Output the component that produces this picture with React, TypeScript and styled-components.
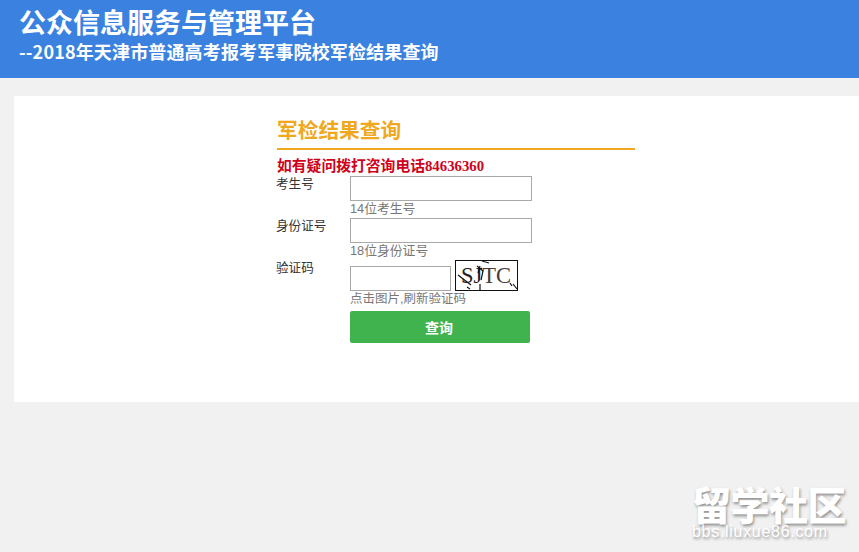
import styled, { createGlobalStyle } from "styled-components";

const GlobalStyle = createGlobalStyle`
  html, body {
    margin: 0;
    padding: 0;
    height: 100%;
    overflow: hidden;
    background: #f1f1f1;
    font-family: "Liberation Sans", "Noto Sans CJK SC", sans-serif;
  }
`;

type FieldProps = {
  label: string;
  hint: string;
};

function Field({ label, hint }: FieldProps) {
  return (
    <Row>
      <Label>{label}</Label>
      <div>
        <Input />
        <Hint>{hint}</Hint>
      </div>
    </Row>
  );
}

function Captcha() {
  return (
    <CaptchaBox viewBox="0 0 63 31" width="63" height="31">
      <rect x="0.5" y="0.5" width="62" height="30" fill="#fff" stroke="#111" />
      <text
        x="6"
        y="23"
        fontFamily="Liberation Serif"
        fontSize="24"
        textLength="50"
        lengthAdjust="spacingAndGlyphs"
      >
        <tspan fill="#222">SJ</tspan>
        <tspan fill="#4a3a3a">TC</tspan>
      </text>
      <path
        d="M3 15 L16 25 M22 6 L28 11 L26 20 M25 6 L23 13 M27 8 L23 10 M25 24 V30 M27 1 L34 3 M12 27 L15 29 M55 23 L57 26 M58 24 L62 29"
        stroke="#111"
        strokeWidth="1.2"
        fill="none"
      />
    </CaptchaBox>
  );
}

export default function App() {
  return (
    <>
      <GlobalStyle />
      <Header>
        <SiteTitle>公众信息服务与管理平台</SiteTitle>
        <SubTitle>--2018年天津市普通高考报考军事院校军检结果查询</SubTitle>
      </Header>
      <Card>
        <Form>
          <FormTitle>军检结果查询</FormTitle>
          <Notice>如有疑问拨打咨询电话84636360</Notice>
          <Field label="考生号" hint="14位考生号" />
          <Field label="身份证号" hint="18位身份证号" />
          <Row>
            <Label>验证码</Label>
            <div>
              <CaptchaLine>
                <CaptchaInput />
                <Captcha />
              </CaptchaLine>
              <CaptchaHint>点击图片,刷新验证码</CaptchaHint>
              <SubmitButton type="button">查询</SubmitButton>
            </div>
          </Row>
        </Form>
      </Card>
      <Watermark>
        <WatermarkTitle>留学社区</WatermarkTitle>
        <WatermarkUrl>bbs.liuxue86.com</WatermarkUrl>
      </Watermark>
    </>
  );
}

const Header = styled.header`
  height: 78px;
  box-sizing: border-box;
  padding: 7px 0 0 19px;
  background: #3b82e0;
  color: #fff;
`;

const SiteTitle = styled.h1`
  margin: 0;
  font-size: 27px;
  line-height: 30px;
  font-weight: 700;
  font-family: "Noto Sans CJK SC", sans-serif;
`;

const SubTitle = styled.h2`
  margin: 3px 0 0;
  font-size: 18px;
  line-height: 22px;
  letter-spacing: 0.15px;
  font-weight: 700;
  font-family: "Noto Sans CJK SC", sans-serif;
`;

const Card = styled.main`
  margin: 18px 0 0 14px;
  height: 306px;
  box-sizing: border-box;
  padding: 19px 0 0 263px;
  background: #fff;
`;

const Form = styled.section`
  width: 358px;
`;

const FormTitle = styled.h3`
  margin: 0;
  height: 33px;
  line-height: 28px;
  border-bottom: 2px solid #f0a81e;
  font-size: 20.7px;
  font-weight: 700;
  color: #f0a81e;
  font-family: "Noto Sans CJK SC", sans-serif;
`;

const Notice = styled.div`
  margin-top: 7px;
  height: 19px;
  line-height: 19px;
  font-size: 14.8px;
  font-weight: 700;
  color: #d0021b;
  font-family: "Liberation Serif", "Noto Sans CJK SC", serif;
`;

const Row = styled.div`
  display: grid;
  grid-template-columns: 73px 1fr;
`;

const Label = styled.div`
  margin-left: -1px;
  font-size: 12.6px;
  line-height: 16px;
  color: #333;
`;

const Input = styled.input`
  display: block;
  box-sizing: border-box;
  width: 182px;
  height: 25px;
  margin: 0;
  padding: 0;
  border: 1px solid #a9a9a9;
  background: #fff;
`;

const Hint = styled.div`
  height: 17px;
  line-height: 16px;
  font-size: 12.8px;
  color: #777;
`;

const CaptchaLine = styled.div`
  display: flex;
  align-items: flex-end;
  gap: 4px;
`;

const CaptchaInput = styled(Input)`
  width: 101px;
`;

const CaptchaBox = styled.svg`
  display: block;
`;

const CaptchaHint = styled(Hint)`
  font-size: 12.5px;
  line-height: 17px;
`;

const SubmitButton = styled.button`
  display: block;
  width: 180px;
  height: 32px;
  margin-top: 3px;
  padding: 0 2px 0 0;
  border: 0;
  border-radius: 2px;
  background: #40b34f;
  color: #fff;
  font-size: 14px;
  font-weight: 700;
  font-family: "Noto Sans CJK SC", sans-serif;
`;

const Watermark = styled.div`
  position: absolute;
  left: 692px;
  top: 484px;
  width: 160px;
  color: #fff;
  text-shadow: 1px 2px 3px rgba(0, 0, 0, 0.4);
  font-family: "Noto Sans CJK SC", sans-serif;
`;

const WatermarkTitle = styled.div`
  height: 38px;
  font-size: 39px;
  line-height: 38px;
  font-weight: 900;
  letter-spacing: -0.5px;
  white-space: nowrap;
`;

const WatermarkUrl = styled.div`
  margin-top: 2px;
  font-family: "Liberation Sans", sans-serif;
  font-size: 16px;
  line-height: 16px;
  letter-spacing: 0.7px;
  white-space: nowrap;
`;
